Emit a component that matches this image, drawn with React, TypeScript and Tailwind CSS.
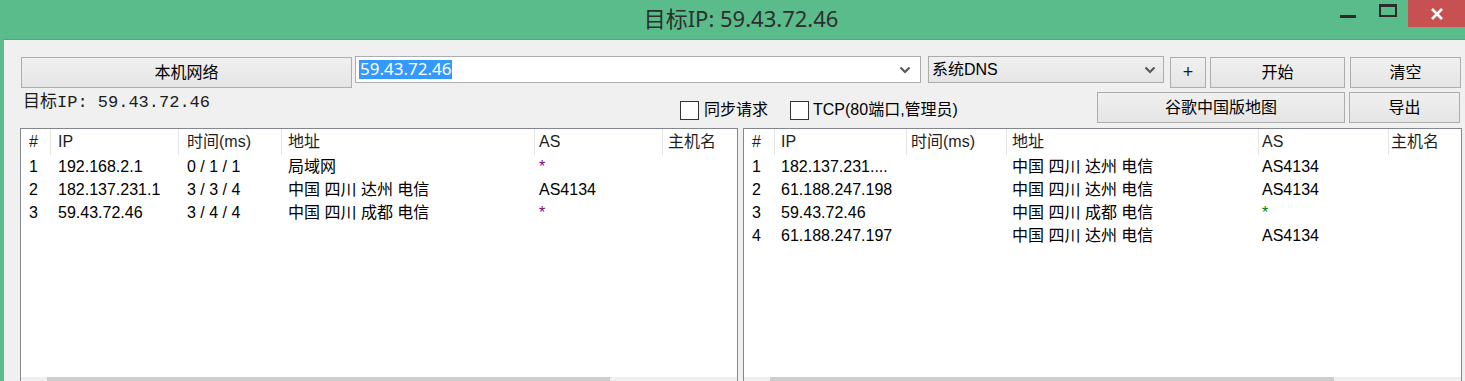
const ui = "font-['Liberation_Sans','Noto_Sans_CJK_SC',sans-serif]";

function Btn({ label, w, cls = "" }: { label: string; w: string; cls?: string }) {
  return (
    <div
      className={`${w} h-[31px] shrink-0 flex items-center justify-center border border-[#adadad] bg-gradient-to-b from-[#f0f0f0] to-[#e5e5e5] text-[16px] text-black ${cls}`}
    >
      {label}
    </div>
  );
}

function Chevron() {
  return (
    <svg width="12" height="8" viewBox="0 0 12 8" className="shrink-0">
      <polyline points="1.5,1.5 6,6 10.5,1.5" fill="none" stroke="#5a5a5a" strokeWidth="2.2" />
    </svg>
  );
}

type Col = { w: string; pl: string; title: string };

const leftCols: Col[] = [
  { w: "w-[30px]", pl: "pl-[8px]", title: "#" },
  { w: "w-[128px]", pl: "pl-[7px]", title: "IP" },
  { w: "w-[103px]", pl: "pl-[8px]", title: "时间(ms)" },
  { w: "w-[253px]", pl: "pl-[6px]", title: "地址" },
  { w: "w-[128px]", pl: "pl-[4px]", title: "AS" },
  { w: "w-[58px]", pl: "pl-[5px]", title: "主机名" },
];

const rightCols: Col[] = [
  { w: "w-[31px]", pl: "pl-[8px]", title: "#" },
  { w: "w-[132px]", pl: "pl-[6px]", title: "IP" },
  { w: "w-[100px]", pl: "pl-[4px]", title: "时间(ms)" },
  { w: "w-[252px]", pl: "pl-[5px]", title: "地址" },
  { w: "w-[130px]", pl: "pl-[3px]", title: "AS" },
  { w: "w-[60px]", pl: "pl-[2px]", title: "主机名" },
];

const leftRows = [
  ["1", "192.168.2.1", "0 / 1 / 1", "局域网", "*", ""],
  ["2", "182.137.231.1", "3 / 3 / 4", "中国 四川 达州 电信", "AS4134", ""],
  ["3", "59.43.72.46", "3 / 4 / 4", "中国 四川 成都 电信", "*", ""],
];

const rightRows = [
  ["1", "182.137.231....", "", "中国 四川 达州 电信", "AS4134", ""],
  ["2", "61.188.247.198", "", "中国 四川 达州 电信", "AS4134", ""],
  ["3", "59.43.72.46", "", "中国 四川 成都 电信", "*", ""],
  ["4", "61.188.247.197", "", "中国 四川 达州 电信", "AS4134", ""],
];

function ListView({
  cols,
  rows,
  starColor,
  w,
  thumb,
}: {
  cols: Col[];
  rows: string[][];
  starColor: string;
  w: string;
  thumb: string;
}) {
  return (
    <div className={`${w} h-[267px] shrink-0 border border-[#828790] bg-white flex flex-col overflow-hidden`}>
      <div className="flex h-[26px] shrink-0">
        {cols.map((c, i) => (
          <div
            key={c.title}
            className={`${c.w} ${c.pl} ${i === cols.length - 1 ? "" : "border-r border-[#e5e5e5]"} shrink-0 flex items-center text-[16px] text-[#1e1e1e] whitespace-nowrap`}
          >
            {c.title}
          </div>
        ))}
        <div className="flex-1" />
      </div>
      <div className="flex-1">
        {rows.map((r) => (
          <div key={r[0]} className="flex h-[23px] items-center">
            {cols.map((c, i) => (
              <div
                key={c.title}
                className={`${c.w} ${c.pl} shrink-0 text-[16px] whitespace-nowrap overflow-hidden ${
                  r[i] === "*" ? starColor : "text-black"
                }`}
              >
                {r[i]}
              </div>
            ))}
          </div>
        ))}
      </div>
      <div className="h-[17px] shrink-0 bg-[#f0f0f0] flex">
        <div className={thumb} />
      </div>
    </div>
  );
}

export default function App() {
  return (
    <div className={`w-[1465px] h-[381px] overflow-hidden bg-[#5bbc8b] flex flex-col ${ui}`}>
      {/* title bar */}
      <div className="h-[39px] shrink-0 flex items-start">
        <div className="flex-1 h-[36px] flex items-center justify-center pl-[142px] text-[22px] text-[#2e2e2e] font-['Noto_Sans','Noto_Sans_CJK_SC',sans-serif]">
          目标IP: 59.43.72.46
        </div>
        <div className="flex items-start">
          <div className="w-[16px] h-[3px] bg-[#2b2b2b] mt-[15px] mr-[23px]" />
          <div className="w-[18px] h-[13px] border-2 border-t-[3px] border-[#2b2b2b] mt-[4px] mr-[11px]" />
          <div className="w-[57px] h-[27px] bg-[#c75050] flex items-center justify-center">
            <svg width="14" height="14" viewBox="0 0 14 14">
              <path d="M2 2 L12 12 M12 2 L2 12" stroke="white" strokeWidth="2.6" />
            </svg>
          </div>
        </div>
      </div>

      {/* client area */}
      <div className="flex-1 ml-[4px] border-t border-[#4fa87b] bg-[#f0f0f0] flex flex-col">
        {/* row 1 */}
        <div className="flex items-start mt-[16px] ml-[17px]">
          <Btn label="本机网络" w="w-[331px]" cls="mt-[1px]" />
          <div className="ml-[3px] w-[566px] h-[27px] shrink-0 border border-[#abadb3] bg-white flex items-center pl-[3px] pr-[9px]">
            <span className="bg-[#3399ff] text-white text-[17px] leading-[18px] h-[19px] px-[1px] font-['Noto_Sans',sans-serif]">
              59.43.72.46
            </span>
            <div className="flex-1" />
            <Chevron />
          </div>
          <div className="ml-[7px] w-[236px] h-[27px] shrink-0 border border-[#acacac] bg-gradient-to-b from-[#f0f0f0] to-[#e5e5e5] flex items-center pl-[3px] pr-[7px] text-[16px] text-black">
            系统DNS
            <div className="flex-1" />
            <Chevron />
          </div>
          <div className="ml-[6px] mt-[1px] w-[36px] h-[31px] shrink-0 flex items-center justify-center border border-[#adadad] bg-gradient-to-b from-[#f0f0f0] to-[#e5e5e5] text-[18px] text-[#1a1a1a]">
            +
          </div>
          <Btn label="开始" w="w-[135px]" cls="ml-[4px] mt-[1px]" />
          <Btn label="清空" w="w-[111px]" cls="ml-[5px] mt-[1px]" />
        </div>

        {/* row 2 */}
        <div className="flex items-start mt-[4px] ml-[19px] h-[31px]">
          <div className="w-[657px] shrink-0 pt-[1px] text-[17px] leading-[20px] text-[#1c1c1c] font-['Liberation_Mono','Noto_Sans_CJK_SC',monospace]">
            目标IP: 59.43.72.46
          </div>
          <div className="w-[110px] shrink-0 flex items-center mt-[6px] text-[16px]">
            <div className="w-[19px] h-[19px] border border-[#333] bg-white" />
            <span className="ml-[5px]">同步请求</span>
          </div>
          <div className="w-[307px] shrink-0 flex items-center mt-[6px] text-[16px]">
            <div className="w-[19px] h-[19px] border border-[#333] bg-white" />
            <span className="ml-[4px]">TCP(80端口,管理员)</span>
          </div>
          <Btn label="谷歌中国版地图" w="w-[248px]" />
          <Btn label="导出" w="w-[111px]" cls="ml-[4px]" />
        </div>

        {/* lists */}
        <div className="flex mt-[5px] ml-[16px] gap-[5px]">
          <ListView
            cols={leftCols}
            rows={leftRows}
            starColor="text-[#800080]"
            w="w-[718px]"
            thumb="ml-[26px] w-[563px] h-full bg-[#cdcdcd]"
          />
          <ListView
            cols={rightCols}
            rows={rightRows}
            starColor="text-[#008000]"
            w="w-[719px]"
            thumb="ml-[26px] w-[564px] h-full bg-[#cdcdcd]"
          />
        </div>
      </div>
    </div>
  );
}
